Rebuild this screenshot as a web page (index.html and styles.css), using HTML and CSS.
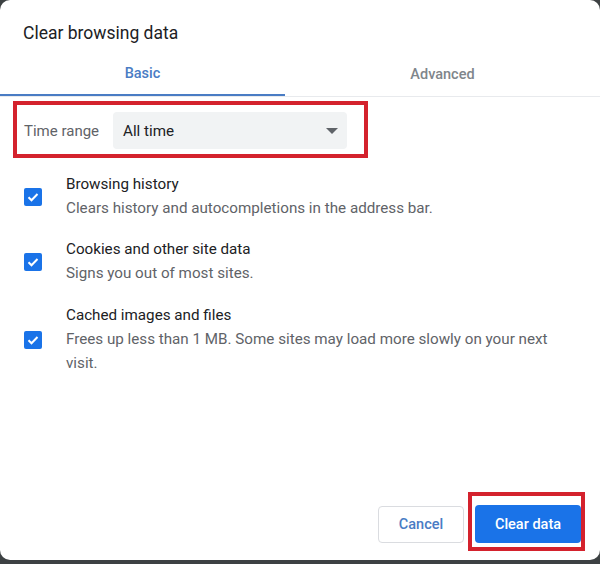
FILE: index.html
```html
<!DOCTYPE html>
<html>
<head>
<meta charset="utf-8">
<link rel="stylesheet" href="styles.css">
</head>
<body>
<div class="dialog">
  <div class="title">Clear browsing data</div>
  <div class="tabs">
    <div class="tab active">Basic</div>
    <div class="tab">Advanced</div>
  </div>
  <div class="content">
    <div class="range-mark">
      <div class="range-row">
        <span class="range-label">Time range</span>
        <div class="select">
          <span>All time</span>
          <span class="caret"></span>
        </div>
      </div>
    </div>
    <div class="item">
      <span class="cb"><svg viewBox="0 0 18 18" width="18" height="18"><path d="M4.5 9.2l3 3 6-6.2" fill="none" stroke="#fff" stroke-width="2"/></svg></span>
      <div class="item-text">
        <div class="item-title">Browsing history</div>
        <div class="item-desc">Clears history and autocompletions in the address bar.</div>
      </div>
    </div>
    <div class="item">
      <span class="cb"><svg viewBox="0 0 18 18" width="18" height="18"><path d="M4.5 9.2l3 3 6-6.2" fill="none" stroke="#fff" stroke-width="2"/></svg></span>
      <div class="item-text">
        <div class="item-title">Cookies and other site data</div>
        <div class="item-desc">Signs you out of most sites.</div>
      </div>
    </div>
    <div class="item">
      <span class="cb"><svg viewBox="0 0 18 18" width="18" height="18"><path d="M4.5 9.2l3 3 6-6.2" fill="none" stroke="#fff" stroke-width="2"/></svg></span>
      <div class="item-text">
        <div class="item-title">Cached images and files</div>
        <div class="item-desc">Frees up less than 1 MB. Some sites may load more slowly on your next visit.</div>
      </div>
    </div>
  </div>
  <div class="actions">
    <button class="btn cancel">Cancel</button>
    <span class="btn-mark"><button class="btn primary">Clear data</button></span>
  </div>
</div>
</body>
</html>
```
FILE: styles.css
```css
html, body {
  margin: 0;
  padding: 0;
}
body {
  width: 600px;
  height: 564px;
  background: #3d4143;
  font-family: Roboto, "Liberation Sans", sans-serif;
  overflow: hidden;
}
.dialog {
  box-sizing: border-box;
  width: 600px;
  height: 560px;
  background: #fff;
  border-radius: 10px;
  display: flex;
  flex-direction: column;
}
.title {
  font-size: 17.5px;
  color: #202124;
  padding: 22px 0 0 23px;
  height: 28px;
  line-height: 22px;
}
.tabs {
  display: flex;
  border-bottom: 1px solid #e8eaed;
  height: 46px;
}
.tab {
  box-sizing: border-box;
  width: 285px;
  text-align: center;
  font-size: 14.5px;
  font-weight: 500;
  color: #80868b;
  line-height: 50px;
}
.tab + .tab {
  width: 315px;
}
.tab.active {
  color: #4a7cc4;
  border-bottom: 2px solid #4a7cc4;
  line-height: 48px;
}
.content {
  flex: 1;
  padding: 4px 0 0 13px;
}
.range-mark {
  box-sizing: border-box;
  width: 355px;
  height: 57px;
  border: 4px solid #d4222d;
  padding: 7px 17px 0 7px;
}
.range-row {
  display: flex;
  align-items: center;
}
.range-label {
  width: 89px;
  font-size: 15px;
  color: #5f6368;
}
.select {
  box-sizing: border-box;
  width: 234px;
  height: 37px;
  background: #f1f3f4;
  border-radius: 4px;
  display: flex;
  align-items: center;
  justify-content: space-between;
  padding: 0 9px 0 10px;
  font-size: 15.2px;
  color: #202124;
}
.caret {
  width: 0;
  height: 0;
  border-left: 6px solid transparent;
  border-right: 6px solid transparent;
  border-top: 6px solid #5f6368;
}
.item {
  display: flex;
  align-items: center;
  padding-left: 11px;
}
.item:nth-child(2) { margin-top: 15px; }
.item:nth-child(3) { margin-top: 18px; }
.item:nth-child(4) { margin-top: 19px; }
.cb {
  width: 18px;
  height: 18px;
  background: #1a73e8;
  border-radius: 2px;
  display: block;
  flex: none;
}
.cb svg { display: block; }
.item-text {
  margin-left: 24px;
  width: 492px;
}
.item-title {
  font-size: 15.2px;
  color: #202124;
  line-height: 23px;
}
.item-desc {
  font-size: 15.2px;
  color: #5f6368;
  line-height: 24px;
}
.actions {
  display: flex;
  justify-content: flex-end;
  align-items: flex-end;
  padding: 0 15px 9px 0;
  gap: 4px;
}
.btn {
  font-family: Roboto, "Liberation Sans", sans-serif;
  font-size: 14.5px;
  font-weight: 500;
  border-radius: 4px;
  height: 38px;
  cursor: pointer;
}
.cancel {
  width: 86px;
  height: 37px;
  margin-bottom: 8px;
  background: #fff;
  border: 1px solid #dadce0;
  color: #4a7cc4;
}
.btn-mark {
  display: block;
  border: 4px solid #d4222d;
  padding: 9px 0 4px 3px;
  width: 117px;
  box-sizing: border-box;
  height: 59px;
}
.primary {
  width: 106px;
  background: #1a73e8;
  border: none;
  color: #fff;
  display: block;
}
```
